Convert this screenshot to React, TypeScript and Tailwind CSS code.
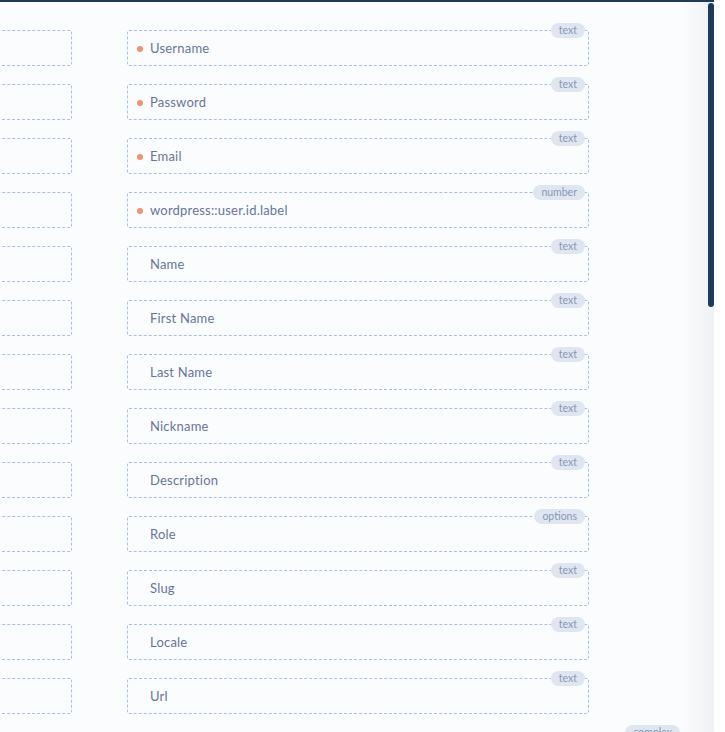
import React from "react";

type Row = { label: string; type: string; required?: boolean };

const rows: Row[] = [
  { label: "Username", type: "text", required: true },
  { label: "Password", type: "text", required: true },
  { label: "Email", type: "text", required: true },
  { label: "wordpress::user.id.label", type: "number", required: true },
  { label: "Name", type: "text" },
  { label: "First Name", type: "text" },
  { label: "Last Name", type: "text" },
  { label: "Nickname", type: "text" },
  { label: "Description", type: "text" },
  { label: "Role", type: "options" },
  { label: "Slug", type: "text" },
  { label: "Locale", type: "text" },
  { label: "Url", type: "text" },
];

function Badge({ children }: { children: React.ReactNode }) {
  return (
    <span className="absolute right-[3px] top-[-8px] h-[15px] px-[8px] rounded-full bg-[#dfe6f1] text-[10.5px] leading-[15px] text-[#8797b3]">
      {children}
    </span>
  );
}

export default function App() {
  return (
    <div
      className="relative w-[725px] h-[732px] overflow-hidden bg-white"
      style={{ fontFamily: "Lato, 'Noto Sans', sans-serif" }}
    >
      <div className="relative w-[714px] h-[732px] overflow-hidden border-t-2 border-[#1e3a5f] bg-[#fbfcfe]">
        <div className="flex flex-col gap-[18px] pt-[28px]">
          {rows.map((r) => (
            <div key={r.label} className="flex gap-[55px]">
              <div className="ml-[-100px] w-[172px] h-[36px] rounded-[2px] border border-dashed border-[#a9c1e6]" />
              <div className="relative w-[462px] h-[36px] rounded-[2px] border border-dashed border-[#a9c1e6] flex items-center pt-[1px]">
                <Badge>{r.type}</Badge>
                <span className="w-[22px] flex justify-center pl-[1px]">
                  {r.required && <span className="w-[6px] h-[6px] rounded-full bg-[#f2906f]" />}
                </span>
                <span className="text-[13px] text-[#66769a] tracking-[0.2px]">{r.label}</span>
              </div>
            </div>
          ))}
          <div className="flex gap-[55px]">
            <div className="ml-[-100px] w-[172px] h-[36px]" />
            <div className="relative w-[557px] h-[36px] border border-dashed border-[#a9c1e6]">
              <Badge>complex</Badge>
            </div>
          </div>
        </div>
        <div className="absolute top-0 right-0 w-[34px] h-full bg-gradient-to-r from-[#fbfcfe] to-[#f0f1f4] pointer-events-none" />
        <div className="absolute top-[1px] right-0 w-[6px] h-[304px] rounded-full bg-[#1e3a5f]" />
      </div>
    </div>
  );
}
